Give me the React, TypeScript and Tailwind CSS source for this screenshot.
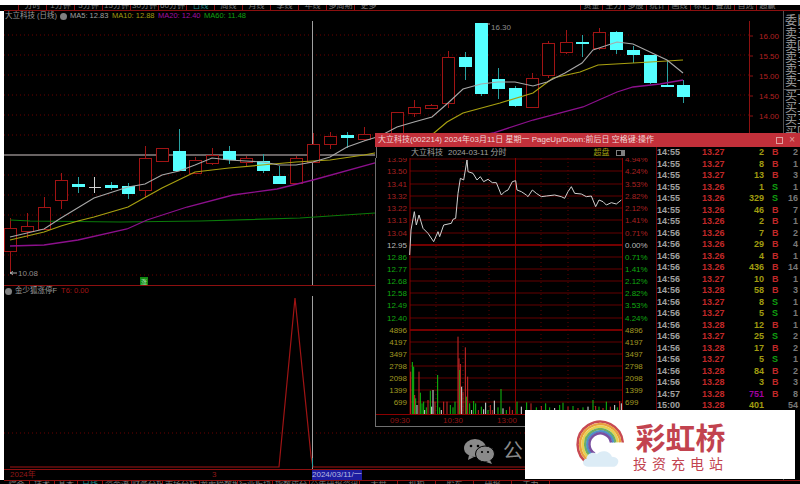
import React from 'react';

// x, wickTop, bodyTop, bodyBottom, wickBottom, up
const candles: [number, number, number, number, number, boolean][] = [
  [10, 218, 228, 251, 273, true],
  [27, 213, 226, 231, 238, true],
  [44, 197, 207, 229, 230, true],
  [61, 173, 180, 200, 209, true],
  [78, 177, 184, 186, 193, false],
  [111, 182, 185, 187, 190, false],
  [128, 183, 186, 193, 199, false],
  [145, 146, 158, 190, 198, true],
  [162, 148, 148, 161, 161, true],
  [179, 129, 151, 170, 170, false],
  [195, 157, 160, 173, 173, true],
  [212, 148, 155, 163, 165, true],
  [229, 146, 151, 159, 164, false],
  [246, 156, 158, 162, 167, true],
  [263, 154, 161, 170, 173, false],
  [279, 166, 176, 183, 183, false],
  [296, 156, 158, 183, 183, true],
  [313, 133, 144, 162, 162, true],
  [330, 132, 136, 144, 149, true],
  [347, 132, 135, 137, 148, false],
  [364, 127, 134, 139, 141, true],
  [397, 112, 112, 133, 133, true],
  [414, 100, 107, 113, 117, true],
  [431, 104, 105, 108, 109, true],
  [448, 51, 57, 103, 108, true],
  [465, 52, 57, 66, 80, false],
  [481, 23, 23, 93, 96, false],
  [498, 68, 79, 88, 99, false],
  [515, 86, 88, 105, 107, false],
  [532, 73, 78, 107, 107, true],
  [548, 41, 43, 75, 78, true],
  [566, 30, 42, 52, 54, true],
  [582, 35, 42, 43, 57, false],
  [599, 28, 32, 48, 50, true],
  [616, 31, 32, 49, 54, false],
  [633, 46, 50, 54, 63, false],
  [650, 55, 55, 82, 84, false],
  [667, 60, 85, 86, 86, false],
  [683, 80, 85, 96, 103, false],
];

const ma5 = '10,237 44,229 61,218 94,198 128,187 145,184 162,175 179,171 195,165 212,158 229,160 246,161 263,162 279,165 296,165 313,162 330,157 347,147 364,141 380,136 397,127 414,122 432,117 448,103 463,89 481,84 498,82 515,82 533,86 547,82 565,73 582,63 593,50 617,42 633,44 667,60 683,73';
const ma10 = '10,240 44,232 61,226 78,221 94,217 128,207 162,188 195,172 229,168 262,165 296,162 330,160 364,155 380,152 400,145 434,133 447,122 463,113 500,103 533,93 553,78 580,72 598,65 633,63 667,61 683,60';
const ma20 = '10,246 44,245 78,240 127,229 147,220 187,207 233,195 277,189 313,180 375,163 430,146 493,133 533,120 583,107 617,92 633,87 660,84 683,80';
const ma60 = '10,220 30,221 120,222 200,221 300,218 375,213';
const gridRows = [35, 55, 75, 95, 115, 135, 175, 195, 215, 235, 255, 275];
const prices: [string, number][] = [['16.00', 36], ['15.50', 56], ['15.00', 76], ['14.50', 96], ['14.00', 116]];
const book = ['委比', '卖五', '卖四', '卖三', '卖二', '卖一', '买一', '买二', '买三', '买四'];

// intraday line, read off a 3x crop
const priceLine = [[110,375],[114,300],[124,245],[130,285],[138,255],[150,295],[165,310],[182,335],[195,305],[200,320],[212,285],[235,280],[240,268],[248,265],[255,190],[262,145],[272,150],[282,90],[285,125],[300,130],[312,150],[322,140],[332,155],[345,148],[358,158],[370,158],[385,195],[395,185],[405,180],[418,155],[428,152],[432,180],[445,185],[460,195],[465,200],[478,180],[490,190],[505,200],[520,198],[545,195],[565,200],[575,205],[585,185],[595,170],[605,190],[625,192],[640,200],[655,198],[668,230],[678,210],[690,215],[700,225],[715,218],[730,222],[745,210]]
  .map(([x, y]) => `${374 + x / 3},${130 + y / 3}`).join(' ');

const R = '#d02828', G = '#10c010', W = '#e0e0e0';
const volumes: [number, number, string][] = [
  [113,305,R],[118,276,G],[122,290,G],[125,375,R],[128,385,G],[132,405,W],[138,305,R],[142,368,G],[147,400,G],[152,395,G],[155,420,W],[160,412,G],[165,390,R],[172,362,G],[176,410,W],[180,360,W],[186,395,R],[194,315,G],[200,412,G],[205,420,W],[212,395,R],[222,395,R],[232,405,G],[240,412,G],[246,395,G],[255,200,R],[258,265,R],[260,300,G],[262,282,R],[266,350,W],[270,365,R],[277,232,R],[280,380,G],[284,320,R],[290,400,G],[296,420,W],[302,393,G],[308,400,G],[316,420,R],[325,410,G],[332,418,W],[338,398,W],[345,420,G],[352,405,R],[358,420,R],[364,392,W],[375,412,G],[384,357,G],[390,415,W],[400,420,G],[410,410,R],[418,420,R],[432,395,G],[445,410,W],[461,397,G],[474,400,R],[490,412,G],[505,408,R],[518,400,G],[530,412,G],[545,414,W],[560,405,G],[570,398,G],[585,410,R],[600,408,G],[615,414,R],[630,412,G],[645,410,W],[660,390,G],[668,408,R],[678,410,G],[690,414,R],[700,395,G],[712,410,R],[725,405,W],[733,412,G],[740,393,R],[745,400,W],
];

const leftAxis: [string, number, string][] = [
  ['13.59',159,'#a82020'],['13.50',171,'#a82020'],['13.41',184,'#a82020'],['13.32',196,'#a82020'],['13.22',208,'#a82020'],['13.13',220,'#a82020'],['13.04',233,'#a82020'],['12.95',245,'#b8b8b8'],
  ['12.86',257,'#10a810'],['12.77',269,'#10a810'],['12.68',281,'#10a810'],['12.58',293,'#10a810'],['12.49',305,'#10a810'],['12.40',318,'#10a810'],
  ['4896',330,'#a09820'],['4197',342,'#a09820'],['3497',354,'#a09820'],['2798',366,'#a09820'],['2098',378,'#a09820'],['1399',390,'#a09820'],['699',402,'#a09820'],
];
const rightAxis = ['4.94%','4.24%','3.53%','2.82%','2.12%','1.41%','0.71%','0.00%','0.71%','1.41%','2.12%','2.82%','3.53%','4.24%','4896','4197','3497','2798','2098','1399','699'];

const ticks: [string, string, string, string, string][] = [
  ['14:55','13.27','2','B','2'],['14:55','13.27','8','B','1'],['14:55','13.27','13','B','3'],['14:55','13.26','1','S','1'],['14:55','13.26','329','S','16'],['14:55','13.26','46','B','7'],['14:55','13.26','2','B','1'],
  ['14:56','13.26','7','B','2'],['14:56','13.26','29','B','4'],['14:56','13.26','4','B','1'],['14:56','13.26','436','B','14'],['14:56','13.27','10','B','1'],['14:56','13.28','58','B','3'],['14:56','13.27','8','S','1'],['14:56','13.27','5','S','1'],['14:56','13.28','12','B','1'],['14:56','13.27','25','S','2'],['14:56','13.28','17','B','2'],['14:56','13.27','5','S','1'],['14:56','13.28','84','B','2'],['14:56','13.28','3','B','3'],
  ['14:57','13.28','751','B','8'],['15:00','13.28','401','','54'],
];

const tabsLeft = ['分时', '1分钟', '5分钟', '15分钟', '30分钟', '60分钟', '日线', '周线', '月线', '季线', '年线', '多周期', '更多'];
const tabsRight = ['资金', '主力', '多股', '统计', '画线', '标记', '叠加', '自选', '超赢'];
const bottomTabs: [string, string][] = [
  ['综合', 'w-[26px]'], ['技术', 'w-[25px]'], ['基本', 'w-[23px]'], ['日线', 'w-[25px]'], ['资金流', 'w-[29px]'], ['财务分析', 'w-[31px]'],
  ['市场分析', 'w-[37px]'], ['龙虎榜数据', 'w-[38px]'], ['行业板块', 'w-[35px]'], ['指数成分', 'w-[37px]'], ['公告研报资讯', 'w-[50px]'], ['大盘', 'w-[38px]'], ['机构', 'w-[38px]'], ['股东', 'w-[38px]'], ['研报', 'w-[38px]'], ['主力', 'w-[38px]'],
];

const MainChart: React.FC = () => (
  <svg viewBox="4 21 779 264" className="block w-[779px] h-[264px]">
    {gridRows.map(y => (
      <line key={y} x1="4" x2="749" y1={y} y2={y} stroke="#6a0000" strokeDasharray="1 3" />
    ))}
    <line x1="4" x2="376" y1="155" y2="155" stroke="#8c8484" strokeWidth="1.6" />
    <line x1="312.5" x2="312.5" y1="21" y2="285" stroke="#a0a0a0" />
    {candles.map(([x, wt, bt, bb, wb, up]) => {
      const c = up ? '#a01414' : '#28a0a0';
      return (
        <g key={x}>
          <line x1={x + 0.5} x2={x + 0.5} y1={wt} y2={bt} stroke={c} />
          <line x1={x + 0.5} x2={x + 0.5} y1={bb} y2={wb} stroke={c} />
          <rect x={x - 5.5} y={bt + 0.5} width="12" height={bb - bt} fill={up ? '#000' : '#55ffff'} stroke={up ? '#a01414' : '#55ffff'} />
        </g>
      );
    })}
    <polyline points={ma60} fill="none" stroke="#0a7a0a" strokeWidth="1.2" />
    <polyline points={ma20} fill="none" stroke="#8c108c" strokeWidth="1.3" />
    <polyline points={ma10} fill="none" stroke="#a8a010" strokeWidth="1.2" />
    <polyline points={ma5} fill="none" stroke="#a8a8a8" strokeWidth="1.1" />
    {/* doji, white cross */}
    <path d="M89 187.5h12M94.5 177v16" stroke="#d0d0d0" fill="none" />
    <path d="M10 273h7M10 273l3-1.5M10 273l3 1.5" stroke="#b0b0b0" fill="none" />
    <text x="18" y="276" fontSize="8" fill="#8c8c8c">10.08</text>
    <path d="M487 24h3" stroke="#b0b0b0" />
    <text x="491" y="30" fontSize="8" fill="#8c8c8c">16.30</text>
    <rect x="140" y="277" width="8" height="8" fill="#128a12" />
    <text x="141" y="284" fontSize="6" fill="#b8e0b8">涨</text>
    <path d="M732 14l3 3-3 3-3-3z" fill="none" stroke="#666" />
    <rect x="741" y="14" width="7" height="6" fill="none" stroke="#888" />
    <rect x="745" y="14" width="3" height="6" fill="#888" />
    <line x1="749.5" x2="749.5" y1="21" y2="285" stroke="#8c1010" />
    {prices.map(([t, y]) => (
      <g key={t}>
        <line x1="749" x2="753" y1={y} y2={y} stroke="#8c1010" />
        <text x="759" y={y + 3} fontSize="8" fill="#b02020">{t}</text>
      </g>
    ))}
  </svg>
);

const SubChart: React.FC = () => (
  <svg viewBox="4 296 779 174" className="block w-[779px] h-[174px]">
    <line x1="4" x2="749" y1="433" y2="433" stroke="#6a0000" strokeDasharray="1 3" />
    <line x1="312.5" x2="312.5" y1="296" y2="470" stroke="#a0a0a0" />
    <polyline points="10,467 279,467 295,298 311,456 313,467 749,467" fill="none" stroke="#a01414" strokeWidth="1.2" />
    <line x1="312.5" x2="312.5" y1="458" y2="467" stroke="#28a0a0" />
    <line x1="749.5" x2="749.5" y1="296" y2="470" stroke="#8c1010" />
    <line x1="4" x2="783" y1="469.5" y2="469.5" stroke="#8c1010" />
  </svg>
);

const IntradayChart: React.FC = () => (
  <svg viewBox="376 158 281 269" className="block w-[281px] h-[269px]">
    {leftAxis.map(([, y]) => (
      <line key={y} x1="411" x2="623" y1={y} y2={y} stroke={y === 245 || y === 330 ? '#9c0000' : '#640000'} strokeWidth={y === 245 || y === 330 ? 1.6 : 1} />
    ))}
    {[437, 464, 490, 542, 569, 595].map(x => (
      <line key={x} x1={x} x2={x} y1="158" y2="414" stroke="#640000" strokeDasharray="1 3" />
    ))}
    <line x1="411" x2="411" y1="158" y2="414" stroke="#8c0000" />
    <line x1="516.5" x2="516.5" y1="158" y2="414" stroke="#8c0000" />
    <line x1="623.5" x2="623.5" y1="158" y2="414" stroke="#8c0000" />
    <polyline points={priceLine} fill="none" stroke="#d0d0d0" strokeWidth="1" />
    {volumes.map(([x, y, c]) => (
      <line key={x} x1={374 + x / 3} x2={374 + x / 3} y1={270 + y / 3} y2="414" stroke={c} />
    ))}
    <line x1="376" x2="657" y1="414.5" y2="414.5" stroke="#8c0000" />
    {leftAxis.map(([t, y, c]) => (
      <text key={y} x="408" y={y + 3} textAnchor="end" fontSize="8" fill={c}>{t}</text>
    ))}
    {rightAxis.map((t, i) => (
      <text key={i} x="626" y={leftAxis[i][1] + 3} fontSize="8" fill={i < 7 ? '#a82020' : i === 7 ? '#b8b8b8' : i < 14 ? '#10a810' : '#a09820'}>{t}</text>
    ))}
    <text x="391" y="423" fontSize="8" fill="#901414">09:30</text>
    <text x="444" y="423" fontSize="8" fill="#901414">10:30</text>
    <text x="498" y="423" fontSize="8" fill="#901414">13:00</text>
    <line x1="376.5" x2="376.5" y1="158" y2="426" stroke="#707070" />
    <line x1="376" x2="657" y1="426.5" y2="426.5" stroke="#707070" />
  </svg>
);

const TickTable: React.FC = () => (
  <div className="flex-1 border-l border-[#6a0000] text-[9px] font-bold">
    {ticks.map(([time, price, vol, side, count], i) => (
      <div key={i} className="flex h-[11.5px] items-center whitespace-nowrap leading-[11px]">
        <span className="w-[45px] text-[#a0a0a0]">{time}</span>
        <span className="w-[35px] text-[#c02828]">{price}</span>
        <span className={`w-[27px] text-right ${vol === '751' ? 'text-[#a000a0]' : 'text-[#a09c10]'}`}>{vol}</span>
        <span className={`w-[20px] pl-[8px] ${side === 'S' ? 'text-[#10a010]' : 'text-[#c02828]'}`}>{side}</span>
        <span className="w-[14px] text-right text-[#787878]">{count}</span>
      </div>
    ))}
  </div>
);

const QuoteWindow: React.FC = () => (
  <div className="absolute left-[375px] top-[133px] w-[425px] flex flex-col">
    <div className="h-[14px] bg-[#c2303a] flex items-center justify-between pl-[3px] pr-[5px] text-[8px] text-[#f0d8d8] whitespace-nowrap">
      <span>大立科技(002214) 2024年03月11日 星期一 PageUp/Down:前后日 空格键:操作</span>
      <span className="flex items-center gap-[6px]">
        <span className="w-[7px] h-[7px] border border-[#e0a0a0]" />
        <span className="text-[10px] leading-none text-[#e0a0a0]">×</span>
      </span>
    </div>
    <div className="flex bg-black">
      <div className="w-[281px] flex flex-col shrink-0">
        <div className="h-[11px] flex items-center text-[8px] text-[#a0a0a0] whitespace-nowrap border-l border-[#707070] ml-[1px]">
          <span className="ml-[34px]">大立科技</span>
          <span className="ml-[5px]">2024-03-11 分时</span>
          <span className="ml-[87px] text-[#a09c10]">超盘</span>
          <span className="ml-[6px] w-[9px] h-[6px] border border-[#808080] flex justify-end"><span className="w-[3px] bg-[#808080]" /></span>
        </div>
        <IntradayChart />
      </div>
      <TickTable />
    </div>
  </div>
);

const Banner: React.FC = () => (
  <div className="absolute left-[525px] top-[410px] w-[270px] h-[69px] bg-white flex items-center">
    <svg viewBox="0 0 62 60" className="ml-[50px] w-[52px] h-[52px] shrink-0 overflow-visible">
      {[
        ['#c84a52', 27],
        ['#e8a040', 24],
        ['#e8d050', 21],
        ['#70b060', 18],
        ['#5090c8', 15.5],
        ['#7a50a0', 13],
      ].map(([c, r]) => (
        <path
          key={c as string}
          d={`M${30 - (r as number) * 0.5} ${29 + (r as number) * 0.87}A${r} ${r} 0 1 1 ${30 + (r as number)} 27`}
          fill="none"
          stroke={c as string}
          strokeWidth="3"
        />
      ))}
      <path d="M16 56c-7 0-9-8-2-10 0-6 8-9 12-5 5-6 16-4 18 3 7 0 9 5 7 8-1 3-3 4-6 4z" fill="#dcecf6" />
    </svg>
    <div className="ml-[6px] flex flex-col items-center w-[95px]">
      <span className="mt-[4px] text-[30px] leading-[34px] font-bold text-[#c2434f] whitespace-nowrap">彩虹桥</span>
      <span className="text-[14px] leading-[16px] tracking-[5px] text-[#c2434f] whitespace-nowrap">投资充电站</span>
    </div>
  </div>
);

export default function App() {
  return (
    <div className="relative w-[800px] h-[484px] overflow-hidden bg-black font-['Liberation_Sans','Noto_Sans_CJK_SC',sans-serif]">
      <div className="h-[5px] bg-white" />
      <div className="h-[6px] ml-[4px] pl-[14px] border-b border-[#8c1010] flex items-end overflow-hidden text-[8px] leading-[8px] text-[#787878] whitespace-nowrap">
        {tabsLeft.map(t => (
          <span key={t} className={`w-[28px] shrink-0 text-center border-l border-[#8c1010] ${t === '日线' ? 'text-[#208c8c]' : ''}`}>{t}</span>
        ))}
        <span className="w-[198px] shrink-0" />
        {tabsRight.map(t => (
          <span key={t} className="w-[22px] shrink-0 text-center border-l border-[#8c1010]">{t}</span>
        ))}
      </div>
      <div className="flex h-[469px]">
        <div className="w-[4px] bg-white shrink-0" />
        <div className="w-[779px] shrink-0 flex flex-col">
          <div className="h-[10px] flex items-center text-[7.5px] whitespace-nowrap">
            <span className="ml-[1px] w-[52px] text-[#9c9c9c]">大立科技 (日线)</span>
            <span className="ml-[3px] w-[7px] h-[7px] rounded-full bg-[#808080]" />
            <span className="ml-[3px] w-[42px] text-[#a0a0a0]">MA5: 12.83</span>
            <span className="w-[46px] text-[#a09c10]">MA10: 12.88</span>
            <span className="w-[46px] text-[#a010a0]">MA20: 12.40</span>
            <span className="text-[#10a010]">MA60: 11.48</span>
          </div>
          <MainChart />
          <div className="h-[11px] border-t border-[#8c1010] flex items-center text-[7.5px] whitespace-nowrap">
            <span className="ml-[1px] w-[7px] h-[7px] rounded-full bg-[#808080]" />
            <span className="ml-[3px] text-[#9c9c9c]">金少狐涨停F</span>
            <span className="ml-[4px] text-[#a01414]">T6: 0.00</span>
          </div>
          <SubChart />
          <div className="h-[10px] flex items-center text-[8px] text-[#901818] whitespace-nowrap">
            <span className="ml-[6px] w-[202px]">2024年</span>
            <span className="w-[100px]">3</span>
            <span className="w-[50px] h-[10px] leading-[10px] bg-[#1c1ca0] text-[#b8b8e0] overflow-hidden">2024/03/11/一</span>
          </div>
        </div>
        <div className="flex-1 flex flex-col border-l border-[#505050] pt-[4px] text-[12px] text-[#a0a0a0] whitespace-nowrap overflow-hidden">
          {book.map((t, i) => (
            <span key={t} className={`pl-[1px] leading-[12px] ${i === 1 ? 'mt-[1px]' : ''} ${i === 6 ? 'mt-[1px] border-t border-[#505050]' : ''}`}>{t}</span>
          ))}
        </div>
      </div>
      <div className="h-[4px] ml-[4px] border-t border-[#8c1010] flex items-start overflow-hidden text-[8px] leading-[8px] text-[#787878] whitespace-nowrap">
        {bottomTabs.map(([t, w]) => (
          <span key={t} className={`${w} shrink-0 text-center overflow-hidden border-r border-[#8c1010] ${t === '日线' ? 'text-[#208c8c]' : ''}`}>{t}</span>
        ))}
      </div>

      <QuoteWindow />

      {/* watermark behind the banner */}
      <div className="absolute left-[463px] top-[438px] flex items-center gap-[8px]">
        <svg viewBox="0 0 32 26" className="w-[32px] h-[26px]">
          <ellipse cx="12" cy="10" rx="11" ry="9" fill="#8a8a8a" />
          <path d="M6 17l-1 5 6-3z" fill="#8a8a8a" />
          <ellipse cx="22" cy="16" rx="9.5" ry="8" fill="#8a8a8a" stroke="#000" />
          <path d="M27 22l2 4-6-2z" fill="#8a8a8a" />
          <circle cx="8" cy="8" r="1.3" fill="#000" />
          <circle cx="15" cy="8" r="1.3" fill="#000" />
          <circle cx="19" cy="14" r="1.1" fill="#000" />
          <circle cx="25" cy="14" r="1.1" fill="#000" />
        </svg>
        <span className="text-[20px] leading-none text-[#8a8a8a]">公</span>
      </div>
      <Banner />
    </div>
  );
}
